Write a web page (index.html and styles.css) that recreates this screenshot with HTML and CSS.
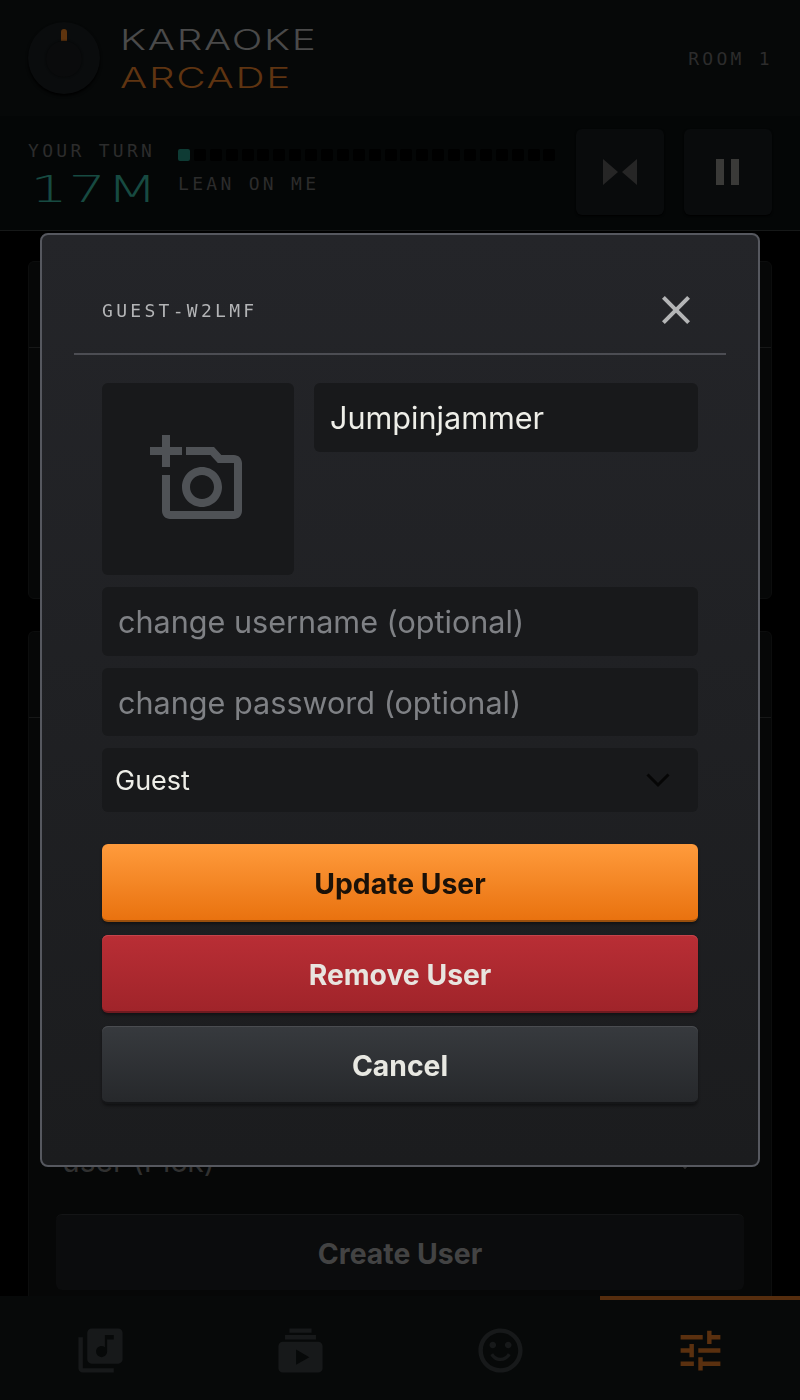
FILE: index.html
```html
<!doctype html>
<html>
<head>
<meta charset="utf-8">
<title>Karaoke Arcade</title>
<link rel="stylesheet" href="styles.css">
</head>

<body>
<div class="app">
	<div class="header">
		<div class="knob"><span class="knob-mark"></span><span class="knob-hole"></span></div>
		<div class="logo">
			<div class="logo-top">KARAOKE</div>
			<div class="logo-bottom">ARCADE</div>
		</div>
		<div class="room">ROOM 1</div>
	</div>
	<div class="upnext">
		<div class="turn">
			<div class="turn-label">YOUR TURN</div>
			<div class="turn-time">17M</div>
		</div>
		<div class="song">
			<div class="meter"><i class="on"></i><i></i><i></i><i></i><i></i><i></i><i></i><i></i><i></i><i></i><i></i><i></i><i></i><i></i><i></i><i></i><i></i><i></i><i></i><i></i><i></i><i></i><i></i><i></i></div>
			<div class="song-name">LEAN ON ME</div>
		</div>
		<div class="transport">
			<div class="tbtn"><svg width="34" height="26" viewBox="0 0 34 26"><path d="M0 0l15 13L0 26zM34 0L19 13l15 13z" fill="#262626"/></svg></div>
			<div class="tbtn"><svg width="24" height="26" viewBox="0 0 24 26"><path d="M0 0h8v26H0zM15 0h8v26h-8z" fill="#3a3a38"/></svg></div>
		</div>
	</div>
	<div class="content">
		<div class="panel panel-a"><div class="panel-head"></div></div>
		<div class="panel panel-b">
			<div class="panel-head"></div>
			<div class="panel-body">
				<div class="under-select"><span>user (Pick)</span><svg class="under-arrow" width="24" height="24" viewBox="0 0 24 24"><path d="M4.500 8l7.500 7.500L19.500 8" fill="none" stroke="#2c2c2c" stroke-width="2.400"/></svg></div>
				<div class="create">Create User</div>
			</div>
		</div>
	</div>
	<div class="tabs">
		<div class="tab">
			<svg width="53" height="53" viewBox="0 0 24 24"><path d="M20 2H8c-1.100 0-2 .9-2 2v12c0 1.100.9 2 2 2h12c1.100 0 2-.9 2-2V4c0-1.100-.9-2-2-2zm-2 5h-3v5.500c0 1.380-1.120 2.500-2.500 2.500S10 13.880 10 12.500s1.120-2.500 2.500-2.500c.57 0 1.080.19 1.500.51V5h4v2zM4 6H2v14c0 1.100.9 2 2 2h14v-2H4V6z" fill="#17191a"/></svg>
		</div>
		<div class="tab">
			<svg width="53" height="53" viewBox="0 0 24 24"><path d="M7 2h10v2H7zM5 5h14v2H5zM4 8h16c1.100 0 2 .9 2 2v10c0 1.100-.9 2-2 2H4c-1.100 0-2-.9-2-2V10c0-1.100.9-2 2-2zm6 3.500v7l6-3.500z" fill="#17191a" fill-rule="evenodd"/></svg>
		</div>
		<div class="tab">
			<svg width="53" height="53" viewBox="0 0 24 24"><path d="M11.990 2C6.470 2 2 6.480 2 12s4.470 10 9.990 10C17.520 22 22 17.520 22 12S17.520 2 11.990 2zM12 20c-4.420 0-8-3.580-8-8s3.580-8 8-8 8 3.580 8 8-3.580 8-8 8zm3.500-9c.83 0 1.500-.67 1.500-1.500S16.330 8 15.500 8 14 8.670 14 9.500s.67 1.500 1.500 1.500zm-7 0c.83 0 1.500-.67 1.500-1.500S9.330 8 8.500 8 7 8.670 7 9.500 7.670 11 8.500 11zm3.500 5.800c-2 0-3.700-1.100-4.600-2.800l1.300-.7c.7 1.300 1.900 2 3.300 2s2.600-.7 3.300-2l1.300.7c-.9 1.700-2.600 2.800-4.600 2.800z" fill="#17191a"/></svg>
		</div>
		<div class="tab tab-on">
			<svg width="53" height="53" viewBox="0 0 24 24"><path d="M3 17v2h6v-2H3zM3 5v2h10V5H3zm10 16v-2h8v-2h-8v-2h-2v6h2zM7 9v2H3v2h4v2h2V9H7zm14 4v-2H11v2h10zm-6-4h2V7h4V5h-4V3h-2v6z" fill="#5a300f"/></svg>
		</div>
	</div>
</div>

<div class="overlay">
	<div class="modal">
		<div class="modal-head">
			<div class="modal-title">GUEST-W2LMF</div>
			<svg width="48" height="48" viewBox="0 0 24 24"><path d="M19 6.410L17.590 5 12 10.590 6.410 5 5 6.410 10.590 12 5 17.590 6.410 19 12 13.410 17.590 19 19 17.590 13.410 12z" fill="#b4b5b6"/></svg>
		</div>
		<div class="modal-body">
			<div class="user-top">
				<div class="photo">
					<svg width="96" height="96" viewBox="0 0 24 24"><path d="M3 4V1h2v3h3v2H5v3H3V6H0V4h3zM21 6h-3.170L16 4H9v2h6.120l1.830 2H21v12H5v-9H3v9c0 1.100.9 2 2 2h16c1.100 0 2-.9 2-2V8c0-1.100-.9-2-2-2zM8 14c0 2.760 2.240 5 5 5s5-2.240 5-5-2.240-5-5-5-5 2.240-5 5zm8 0c0 1.650-1.350 3-3 3s-3-1.350-3-3 1.350-3 3-3 3 1.350 3 3z" fill="#4f5256"/></svg>
				</div>
				<div class="field field-name">Jumpinjammer</div>
			</div>
			<div class="field field-hint">change username (optional)</div>
			<div class="field field-hint">change password (optional)</div>
			<div class="select">
				<span>Guest</span>
				<svg width="24" height="24" viewBox="0 0 24 24"><path d="M1.500 6.500l10.500 10.500L22.500 6.500" fill="none" stroke="#060606" stroke-width="3"/></svg>
			</div>
			<div class="btns">
				<div class="btn btn-update">Update User</div>
				<div class="btn btn-remove">Remove User</div>
				<div class="btn btn-cancel">Cancel</div>
			</div>
		</div>
	</div>
</div>
</body>
</html>
```

FILE: styles.css
```css
*{ margin:0; padding:0; box-sizing:border-box;}
html,body{ height:100%;}
body{ background:#000; font-family:Inter,"Liberation Sans",sans-serif; overflow:hidden;}
.app{ height:1400px; display:flex; flex-direction:column;}

.header{ height:116px; background:#060808; display:flex; align-items:center; padding:0 27px 0 28px;}
.knob{ width:72px; height:72px; border-radius:50%; background:#0a0c0d; box-shadow:0 2px 3px #000; position:relative; flex:none;}
.knob-mark{ position:absolute; left:33px; top:7px; width:6px; height:14px; border-radius:3px; background:#5f340e;}
.knob-hole{ position:absolute; left:18px; top:19px; width:36px; height:36px; border-radius:50%; background:#0a0b0c; box-shadow:0 0 2px #060707;}
.logo{ margin:1px 0 0 20px; font-weight:300; font-size:28px; line-height:38px; transform:scaleX(1.44); transform-origin:left center; white-space:nowrap;}
.logo-top{ color:#4a4a4a; letter-spacing:1.200px;}
.logo-bottom{ color:#5f3411; letter-spacing:1.200px;}
.room{ margin-left:auto; font-family:"DejaVu Sans Mono","Liberation Mono",monospace; font-size:18px; letter-spacing:3.300px; color:#2c2c2c;}

.upnext{ height:115px; background:#040606; border-bottom:1px solid #161818; display:flex; padding:0 28px;}
.turn{ padding-top:23px; width:150px; flex:none;}
.turn-label,.song-name{ font-family:"DejaVu Sans Mono","Liberation Mono",monospace; font-size:18px; letter-spacing:3.300px; color:#2c2c2c; line-height:24px; white-space:nowrap;}
.turn-time{ font-family:"DejaVu Sans",sans-serif; font-weight:200; font-size:37px; line-height:44px; margin:5px 0 0 2px; color:#174a41; transform:scaleX(1.62); transform-origin:left center;}
.song{ padding-top:33px;}
.meter{ display:flex; gap:3.900px; height:12px;}
.meter i{ width:12px; height:12px; background:#000; border-radius:2px;}
.meter i.on{ background:#0e3b34;}
.song-name{ margin-top:11px;}
.transport{ margin-left:auto; display:flex; gap:20px; padding-top:13px;}
.tbtn{ width:88px; height:86px; border-radius:6px; background:#090b0c; box-shadow:0 1px 2px #000; display:flex; align-items:center; justify-content:center;}

.content{ flex:1; padding:30px 28px 0; display:flex; flex-direction:column; gap:32px; overflow:hidden; min-height:0;}
.panel{ background:#060707; border:1px solid #0c0d0d; border-radius:6px;}
.panel-a{ height:338px;}
.panel-b{ flex:1; min-height:0; border-bottom:0; border-radius:6px 6px 0 0;}
.panel-head{ height:86px; border-bottom:1px solid #161717;}
.panel-body{ padding:0 27px;}
.under-select{ margin-top:428px; height:30px; display:flex; justify-content:space-between; align-items:center; font-size:30px; color:#303030; padding:0 47px 0 6px; line-height:30px;}
.under-arrow{ margin-top:6px;}
.create{ margin-top:38px; height:76px; padding-top:2px; border-radius:6px; background:#0b0c0d; border-top:1px solid #141516; color:#434343; font-size:28.400px; font-weight:700; display:flex; align-items:center; justify-content:center;}

.tabs{ height:104px; background:#070909; display:flex;}
.tab{ flex:1; display:flex; align-items:center; justify-content:center; border-top:4px solid transparent;}
.tab-on{ border-top-color:#552d0e;}

.overlay{ position:fixed; left:0; top:0; width:800px; height:1400px; display:flex; align-items:center; justify-content:center;}
.modal{ width:720px; height:934px; background:linear-gradient(#242529,#1b1c1e); border:2px solid #56585f; border-radius:8px; padding:0 32px;}
.modal-head{ height:120px; border-bottom:2px solid #4c4d53; display:flex; align-items:center; justify-content:space-between; padding:32px 26px 0 28px;}
.modal-title{ font-family:"DejaVu Sans Mono","Liberation Mono",monospace; font-size:18px; letter-spacing:3.300px; color:#b3b4b6; white-space:nowrap;}
.modal-body{ padding:28px 28px 0;}
.user-top{ display:flex; gap:20px; align-items:flex-start; margin-bottom:12px;}
.photo{ width:192px; height:192px; flex:none; background:#18191b; border-radius:6px; display:flex; align-items:center; justify-content:center;}
.field{ height:69px; background:#18191b; border-radius:6px; font-size:30.600px; padding:0 16px; display:flex; align-items:center;}
.field-name{ flex:1; color:#eeeee8;}
.field-hint{ height:68.500px; padding-top:1px; color:#7f8185; margin-bottom:12px;}
.select{ height:64px; background:#18191b; border-radius:6px; font-size:27px; color:#eeeee8; padding:0 28px 0 13px; display:flex; align-items:center; justify-content:space-between;}
.btns{ margin-top:32px; display:flex; flex-direction:column; gap:13px;}
.btn{ height:78px; border-radius:6px; padding-top:3px; font-size:28.300px; font-weight:700; display:flex; align-items:center; justify-content:center; box-shadow:0 2px 3px rgba(0,0,0,.4);}
.btn-update{ background:linear-gradient(#ff9b3c,#e9720f); border-bottom:2px solid #9a4f0c; color:#1b1108;}
.btn-remove{ background:linear-gradient(#b92e35,#a0242a); border-bottom:2px solid #6f1a20; box-shadow:inset 0 1px 0 #c4444c,0 2px 3px rgba(0,0,0,.4); color:#e8e4df;}
.btn-cancel{ background:linear-gradient(#373a3e,#26282b); border-bottom:2px solid #151618; box-shadow:inset 0 1px 0 #4a4c50,0 2px 3px rgba(0,0,0,.4); color:#e8e8e2;}
```
